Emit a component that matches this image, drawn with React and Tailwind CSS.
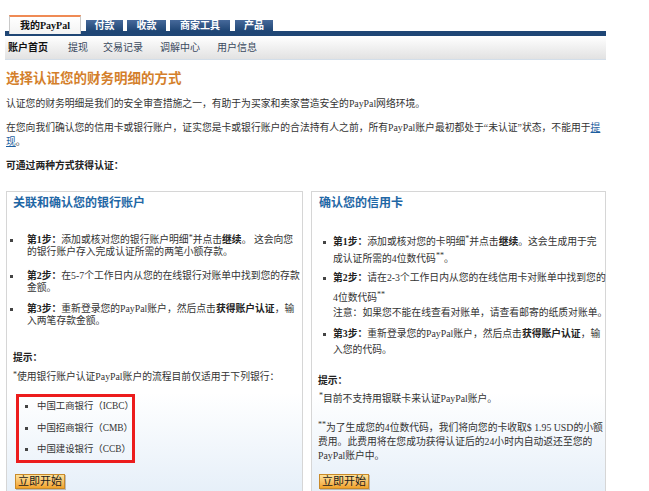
import React from "react";

// shared font stack: narrow serif for latin, CJK fallback
const FONT = "font-['Liberation_Serif','Noto_Sans_CJK_SC',serif]";

function Bullet({ top = "mt-[5px]" }) {
  return <span className={`${top} h-[3px] w-[3px] shrink-0 bg-[#444]`} />;
}

function Star({ children }) {
  return <span className="align-top text-[8px] leading-none">{children}</span>;
}

function StartButton({ className = "" }) {
  return (
    <div
      className={`flex h-[15px] w-[50px] items-center justify-center border border-[#c98a2a] bg-linear-to-b from-[#fde29a] to-[#f1a226] text-[11px] leading-[13px] text-[#1a1a1a] shadow-[1px_1px_0_#b9b9b9] ${className}`}
    >
      立即开始
    </div>
  );
}

function BankItem({ name, className = "" }) {
  return (
    <div className={`flex items-center whitespace-nowrap leading-[14px] ${className}`}>
      <Bullet top="mt-0" />
      <span className="ml-[9px]">{name}</span>
    </div>
  );
}

export default function App() {
  return (
    <div className={`h-[491px] w-[649px] overflow-hidden bg-white text-[9.8px] text-[#333] ${FONT}`}>
      <div className="ml-[5px] w-[601px] pt-[15px]">
        {/* TABS */}
        <div className="flex h-[21px] items-end border-b-[5px] border-[#1f4675] pl-[4px]">
          <div className="-mb-[3px] flex h-[19px] w-[72px] items-center justify-center border-x border-t-2 border-x-[#c9c9c9] border-t-[#ef8a55] bg-linear-to-b from-white to-[#f3f3f3] text-[10px] font-bold text-[#111]">
            我的PayPal
          </div>
          <div className="ml-[5px] flex h-[11px] w-[37px] items-center justify-center bg-linear-to-b from-[#46699a] to-[#1f4675] text-[10px] font-bold leading-[13px] text-white">
            付款
          </div>
          <div className="ml-[4px] flex h-[11px] w-[39px] items-center justify-center bg-linear-to-b from-[#46699a] to-[#1f4675] text-[10px] font-bold leading-[13px] text-white">
            收款
          </div>
          <div className="ml-[4px] flex h-[11px] w-[60px] items-center justify-center bg-linear-to-b from-[#46699a] to-[#1f4675] text-[10px] font-bold leading-[13px] text-white">
            商家工具
          </div>
          <div className="ml-[5px] flex h-[11px] w-[38px] items-center justify-center bg-linear-to-b from-[#46699a] to-[#1f4675] text-[10px] font-bold leading-[13px] text-white">
            产品
          </div>
        </div>

        {/* SUB NAV */}
        <div className="flex h-[24px] items-center border-b border-[#d3dee9] bg-linear-to-b from-white to-[#e2e2e2] text-[10px] text-[#3b4a5e]">
          <span className="ml-[3px] font-bold text-[#111]">账户首页</span>
          <span className="ml-[20px]">提现</span>
          <span className="ml-[15px]">交易记录</span>
          <span className="ml-[17px]">调解中心</span>
          <span className="ml-[17px]">用户信息</span>
        </div>

        {/* INTRO */}
        <div className="pl-[1px]">
          <h1 className="mt-[11px] text-[13.5px] font-bold leading-[16px] text-[#d47f2b]">
            选择认证您的财务明细的方式
          </h1>
          <p className="mt-[10px] whitespace-nowrap leading-[14px]">
            认证您的财务明细是我们的安全审查措施之一，有助于为买家和卖家营造安全的PayPal网络环境。
          </p>
          <p className="mt-[10px] whitespace-nowrap leading-[13.5px]">
            在您向我们确认您的信用卡或银行账户，证实您是卡或银行账户的合法持有人之前，所有PayPal账户最初都处于“未认证”状态，不能用于
            <span className="text-[#1e5fa0] underline">提</span>
            <br />
            <span className="text-[#1e5fa0] underline">现</span>。
          </p>
          <p className="mt-[11px] font-bold leading-[14px] text-[#222]">可通过两种方式获得认证：</p>
        </div>

        {/* PANELS */}
        <div className="mt-[18px] flex gap-[8px] pl-[1px]">
          {/* LEFT */}
          <div className="w-[297px] border border-[#d6d6d6] bg-linear-to-b from-white from-65% to-[#e4eef8] pb-[12px]">
            <h2 className="ml-[6px] mt-[3px] text-[12px] font-bold leading-[16px] text-[#1f67a5]">
              关联和确认您的银行账户
            </h2>

            <div className="ml-[3px] mt-[23px] flex whitespace-nowrap leading-[12px]">
              <Bullet top="mt-[4.5px]" />
              <div className="ml-[14px]">
                <b className="text-[#222]">第1步：</b>添加或核对您的银行账户明细<Star>*</Star>并点击<b className="text-[#222]">继续</b>。 这会向您
                <br />
                的银行账户存入完成认证所需的两笔小额存款。
              </div>
            </div>
            <div className="ml-[3px] mt-[12px] flex whitespace-nowrap leading-[12px]">
              <Bullet top="mt-[4.5px]" />
              <div className="ml-[14px]">
                <b className="text-[#222]">第2步：</b>在5-7个工作日内从您的在线银行对账单中找到您的存款
                <br />
                金额。
              </div>
            </div>
            <div className="ml-[3px] mt-[9px] flex whitespace-nowrap leading-[12px]">
              <Bullet top="mt-[4.5px]" />
              <div className="ml-[14px]">
                <b className="text-[#222]">第3步：</b>重新登录您的PayPal账户，然后点击<b className="text-[#222]">获得账户认证</b>，输
                <br />
                入两笔存款金额。
              </div>
            </div>

            <p className="ml-[6px] mt-[25px] font-bold leading-[12px] text-[#222]">提示：</p>
            <p className="ml-[6px] mt-[7px] whitespace-nowrap leading-[12px]">
              <Star>*</Star>使用银行账户认证PayPal账户的流程目前仅适用于下列银行：
            </p>

            <div className="ml-[9px] mt-[11px] h-[69px] w-[119px] border-[3px] border-[#ec1c1c] pl-[6px] pt-[2px] text-[9.4px]">
              <BankItem name="中国工商银行（ICBC）" />
              <BankItem name="中国招商银行（CMB）" className="mt-[8px]" />
              <BankItem name="中国建设银行（CCB）" className="mt-[7px]" />
            </div>

            <StartButton className="ml-[8px] mt-[11px]" />
          </div>

          {/* RIGHT */}
          <div className="w-[295px] border border-[#d6d6d6] bg-linear-to-b from-white from-65% to-[#e4eef8] pb-[12px]">
            <h2 className="ml-[7px] mt-[3px] text-[12px] font-bold leading-[16px] text-[#1f67a5]">
              确认您的信用卡
            </h2>

            <div className="ml-[11px] mt-[24px] flex whitespace-nowrap leading-[14px]">
              <Bullet top="mt-[5.5px]" />
              <div className="ml-[7px]">
                <div>
                  <b className="text-[#222]">第1步：</b>添加或核对您的卡明细<Star>*</Star>并点击<b className="text-[#222]">继续</b>。这会生成用于完
                </div>
                <div className="mt-[3px]">
                  成认证所需的4位数代码<Star>**</Star>。
                </div>
              </div>
            </div>
            <div className="ml-[11px] mt-[5px] flex whitespace-nowrap leading-[14px]">
              <Bullet top="mt-[5.5px]" />
              <div className="ml-[7px]">
                <div>
                  <b className="text-[#222]">第2步：</b>请在2-3个工作日内从您的在线信用卡对账单中找到您的
                </div>
                <div className="mt-[6px]">
                  4位数代码<Star>**</Star>
                </div>
                <div className="mt-[1px]">注意：如果您不能在线查看对账单，请查看邮寄的纸质对账单。</div>
              </div>
            </div>
            <div className="ml-[11px] mt-[7px] flex whitespace-nowrap leading-[14px]">
              <Bullet top="mt-[5.5px]" />
              <div className="ml-[7px]">
                <div>
                  <b className="text-[#222]">第3步：</b>重新登录您的PayPal账户，然后点击<b className="text-[#222]">获得账户认证</b>，输
                </div>
                <div className="mt-[2px]">入您的代码。</div>
              </div>
            </div>

            <p className="ml-[6px] mt-[17px] font-bold leading-[14px] text-[#222]">提示：</p>
            <p className="ml-[7px] mt-[4px] leading-[14px]">
              <Star>*</Star>目前不支持用银联卡来认证PayPal账户。
            </p>
            <p className="ml-[6px] mt-[15px] whitespace-nowrap leading-[14px]">
              <Star>**</Star>为了生成您的4位数代码，我们将向您的卡收取$ 1.95 USD的小额
              <br />
              费用。此费用将在您成功获得认证后的24小时内自动返还至您的
              <br />
              PayPal账户中。
            </p>

            <StartButton className="ml-[7px] mt-[11px]" />
          </div>
        </div>
      </div>
    </div>
  );
}
